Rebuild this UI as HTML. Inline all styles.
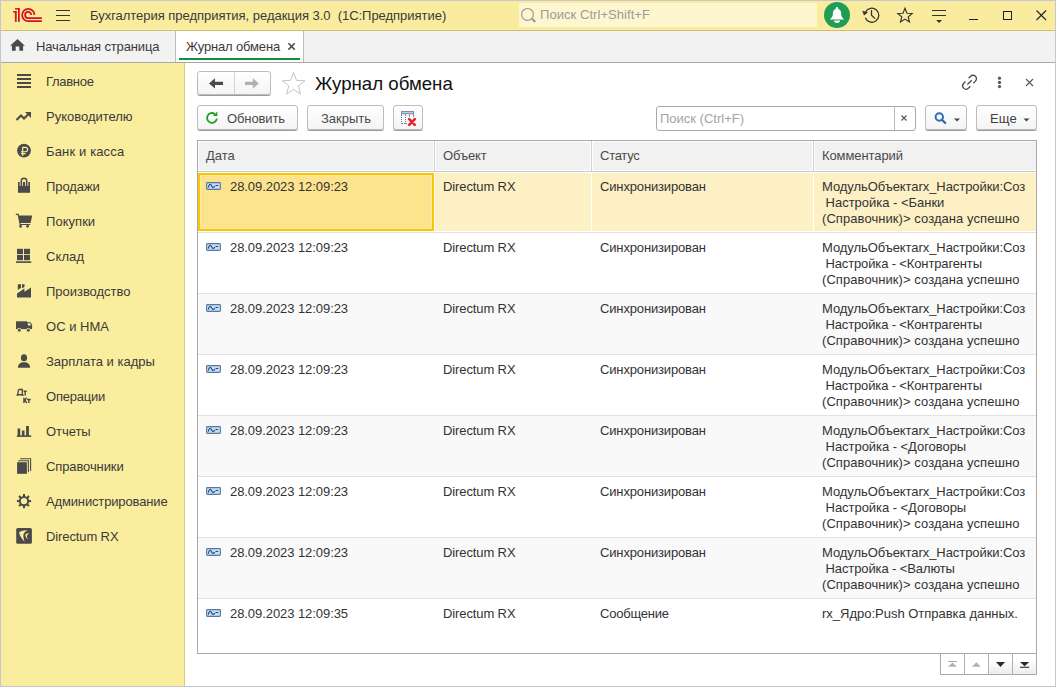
<!DOCTYPE html><html><head><meta charset="utf-8"><title>1C</title><style>
*{margin:0;padding:0;box-sizing:border-box}
html,body{width:1056px;height:687px;overflow:hidden;background:#fff;font-family:"Liberation Sans", sans-serif}
.a{position:absolute}
.t{position:absolute;white-space:pre}
svg{position:absolute;overflow:visible}
.btn{position:absolute;border:1px solid #bdbdbd;border-radius:3px;background:linear-gradient(#ffffff,#f4f4f4);box-shadow:0 1px 0 #9a9a9a}
</style></head><body>
<div class="a" style="left:0;top:0;width:1056px;height:687px;border:1px solid #c5c6cf;"></div>
<div class="a" style="left:1px;top:1px;width:1054px;height:29px;background:#f9ec9e"></div>
<div class="a" style="left:1px;top:29px;width:1054px;height:1px;background:#fcefa6"></div>
<div class="a" style="left:1px;top:30px;width:1054px;height:1px;background:#cebd70"></div>
<div class="a" style="left:1px;top:31px;width:1054px;height:31px;background:#f2f2f2"></div>
<div class="a" style="left:1px;top:31px;width:1054px;height:1px;background:#f4f4f7"></div>
<div class="a" style="left:1px;top:62px;width:1054px;height:1px;background:#a8a8a8"></div>
<div class="a" style="left:1px;top:63px;width:183px;height:623px;background:#fbed9e"></div>
<div class="a" style="left:184px;top:63px;width:1px;height:623px;background:#d9c77c"></div>
<svg style="left:0;top:0" width="60" height="30">
<g fill="#d8111e"><rect x="14.9" y="11.1" width="1.8" height="10.8"/><rect x="13.1" y="11.1" width="3.6" height="1.5"/>
<rect x="18" y="8.1" width="1.75" height="13.8"/><rect x="15.1" y="8.1" width="4.6" height="1.5"/></g>
<g fill="none" stroke="#d8111e" stroke-width="1.75">
<path d="M41.9 21.1 H28.3 A6.15 6.15 0 1 1 34.45 14.95"/>
<path d="M41.9 18.1 H28.2 A3.1 3.1 0 1 1 31.3 15"/>
</g></svg>
<div class="a" style="left:56px;top:10px;width:14px;height:1px;background:#333"></div>
<div class="a" style="left:56px;top:15px;width:14px;height:1px;background:#333"></div>
<div class="a" style="left:56px;top:20px;width:14px;height:1px;background:#333"></div>
<div class="t" style="left:90px;top:8.00px;font-size:13px;line-height:15px;color:#3a3a3a;letter-spacing:-0.031px;">Бухгалтерия предприятия, редакция 3.0  (1С:Предприятие)</div>
<div class="a" style="left:519px;top:3px;width:298px;height:24px;background:#fdf6cf;border-radius:1px"></div>
<svg style="left:0;top:0" width="1" height="1"><g fill="none" stroke="#999" stroke-width="1.15"><circle cx="527.5" cy="14.4" r="5.9"/><path d="M532 18.8 L535.3 22" stroke-width="2.1"/></g></svg>
<div class="t" style="left:540px;top:7.20px;font-size:13px;line-height:15px;color:#9b9b9b;letter-spacing:0.053px;">Поиск Ctrl+Shift+F</div>
<svg style="left:0;top:0" width="1" height="1"><circle cx="837" cy="15" r="13" fill="#1f9d55"/>
<path d="M829.8 19.4 C831.6 18 832.9 16.5 832.9 13.2 C832.9 10.4 834.6 8.7 837 8.7 C839.4 8.7 841.1 10.4 841.1 13.2 C841.1 16.5 842.4 18 844.2 19.4 Z" fill="#fff"/>
<circle cx="837" cy="8.2" r="1.2" fill="#fff"/>
<path d="M834 20.6 H840 A3 2.4 0 0 1 834 20.6 Z" fill="#fff"/>
</svg>
<svg style="left:0;top:0" width="1" height="1"><g fill="none" stroke="#333" stroke-width="1.3">
<path d="M865.6 12 A7 7 0 1 1 865.3 17.8"/>
<path d="M871.5 10 V15.2 L875 18.6"/></g>
<path d="M862.3 10.8 L868 12.3 L864 15.5 Z" fill="#333"/></svg>
<svg style="left:0;top:0" width="1" height="1"><path d="M905 8.2 L907 13.2 L912.2 13.5 L908.2 16.9 L909.5 22 L905 19.1 L900.5 22 L901.8 16.9 L897.8 13.5 L903 13.2 Z" fill="none" stroke="#333" stroke-width="1.15" stroke-linejoin="miter"/></svg>
<div class="a" style="left:932px;top:10px;width:14px;height:1.3px;background:#333"></div>
<div class="a" style="left:932px;top:15px;width:14px;height:1.3px;background:#333"></div>
<svg style="left:0;top:0" width="1" height="1"><path d="M936.2 20 H942 L939.1 22.9 Z" fill="#333"/></svg>
<div class="a" style="left:969px;top:19px;width:9px;height:1px;background:#222"></div>
<div class="a" style="left:1003px;top:11px;width:9px;height:9px;border:1px solid #222"></div>
<svg style="left:0;top:0" width="1" height="1"><path d="M1036.5 10.5 L1046 20 M1046 10.5 L1036.5 20" stroke="#222" stroke-width="1.1"/></svg>
<div class="a" style="left:175px;top:31px;width:1px;height:31px;background:#bdbdbd"></div>
<div class="a" style="left:176px;top:31px;width:127px;height:31px;background:#fff"></div>
<div class="a" style="left:303px;top:31px;width:1px;height:31px;background:#bdbdbd"></div>
<div class="a" style="left:179px;top:58px;width:121px;height:2px;background:#0e8f3e"></div>
<svg style="left:0;top:0" width="1" height="1"><path d="M17.5 39 L24.9 45.8 H23.1 V50.8 H19.3 V46.6 H15.7 V50.8 H11.9 V45.8 H10.1 Z" fill="#4a4a4a"/></svg>
<div class="t" style="left:36px;top:38.50px;font-size:13px;line-height:15px;color:#3a3a3a;letter-spacing:-0.136px;">Начальная страница</div>
<div class="t" style="left:186px;top:38.50px;font-size:13px;line-height:15px;color:#3a3a3a;letter-spacing:-0.154px;">Журнал обмена</div>
<svg style="left:0;top:0" width="1" height="1"><path d="M288.4 43.3 L294.7 49.6 M294.7 43.3 L288.4 49.6" stroke="#4a4a4a" stroke-width="1.5"/></svg>
<div class="t" style="left:46px;top:73.50px;font-size:13px;line-height:15px;color:#3a3a3a;letter-spacing:-0.291px;">Главное</div>
<div class="t" style="left:46px;top:108.50px;font-size:13px;line-height:15px;color:#3a3a3a;letter-spacing:-0.010px;">Руководителю</div>
<div class="t" style="left:46px;top:143.50px;font-size:13px;line-height:15px;color:#3a3a3a;letter-spacing:0.145px;">Банк и касса</div>
<div class="t" style="left:46px;top:178.50px;font-size:13px;line-height:15px;color:#3a3a3a;letter-spacing:-0.082px;">Продажи</div>
<div class="t" style="left:46px;top:213.50px;font-size:13px;line-height:15px;color:#3a3a3a;letter-spacing:0.036px;">Покупки</div>
<div class="t" style="left:46px;top:248.50px;font-size:13px;line-height:15px;color:#3a3a3a;letter-spacing:0.105px;">Склад</div>
<div class="t" style="left:46px;top:283.50px;font-size:13px;line-height:15px;color:#3a3a3a;letter-spacing:-0.028px;">Производство</div>
<div class="t" style="left:46px;top:318.50px;font-size:13px;line-height:15px;color:#3a3a3a;letter-spacing:0.016px;">ОС и НМА</div>
<div class="t" style="left:46px;top:353.50px;font-size:13px;line-height:15px;color:#3a3a3a;letter-spacing:0.005px;">Зарплата и кадры</div>
<div class="t" style="left:46px;top:388.50px;font-size:13px;line-height:15px;color:#3a3a3a;letter-spacing:-0.226px;">Операции</div>
<div class="t" style="left:46px;top:423.50px;font-size:13px;line-height:15px;color:#3a3a3a;letter-spacing:-0.061px;">Отчеты</div>
<div class="t" style="left:46px;top:458.50px;font-size:13px;line-height:15px;color:#3a3a3a;letter-spacing:-0.108px;">Справочники</div>
<div class="t" style="left:46px;top:493.50px;font-size:13px;line-height:15px;color:#3a3a3a;letter-spacing:-0.147px;">Администрирование</div>
<div class="t" style="left:46px;top:528.50px;font-size:13px;line-height:15px;color:#3a3a3a;letter-spacing:-0.111px;">Directum RX</div>
<svg style="left:0;top:0" width="1" height="1"><g fill="#4a4a4a"><rect x="17" y="74.0" width="14" height="2" /><rect x="17" y="78.0" width="14" height="2"/><rect x="17" y="82.0" width="14" height="2"/><rect x="17" y="86.0" width="14" height="2"/><path d="M16.5 120.0 L21 115.5 L24 118.5 L28 114.5" fill="none" stroke="#4a4a4a" stroke-width="2"/><path d="M25 112.0 H31 V118.0 Z"/><circle cx="24" cy="150.6" r="6.9"/><path d="M22.7 156 V147.3 H25.4 A2.2 2.2 0 0 1 25.4 151.7 H20.9 M20.9 153.6 H25.6" fill="none" stroke="#fbed9e" stroke-width="1.15"/><rect x="18" y="182" width="12" height="10.8"/><path d="M21.3 186 V181 A2.7 2.7 0 0 1 26.7 181 V186" fill="none" stroke="#fbed9e" stroke-width="3.2"/><path d="M21.3 186 V181 A2.7 2.7 0 0 1 26.7 181 V186" fill="none" stroke="#4a4a4a" stroke-width="1.5"/><path d="M15.8 213.8 H18.6 L19.2 215.6 H32.2 L30.6 223 H20.4 L20.7 224 H30.2 V225 H19.7 L17.7 215 H15.8 Z"/><circle cx="20.6" cy="226.3" r="1.35"/><circle cx="27.6" cy="226.3" r="1.35"/><rect x="17" y="248.8" width="6" height="5.4"/><rect x="24" y="248.8" width="6" height="5.4"/><rect x="17" y="255" width="6" height="5.2"/><rect x="24" y="255" width="6" height="5.2"/><rect x="16" y="261.3" width="15.2" height="1.6"/><path d="M17 297.4 V293.6 L24.4 288.6 V291.8 L31 287.6 V297.4 Z"/><path d="M17.8 284.3 H21 V287.8 L17.8 290 Z M22 284.3 H24.5 V286.8 L22 288.4 Z"/><rect x="16" y="321.3" width="11" height="7.8"/><path d="M27 322.3 H30.6 L32.1 325 V329.1 H27 Z"/><path d="M27.9 323.3 H30.1 L31.1 325.6 H27.9 Z" fill="#fbed9e"/><circle cx="19.3" cy="330.2" r="1.9" stroke="#fbed9e" stroke-width="0.9"/><circle cx="28.3" cy="330.2" r="1.9" stroke="#fbed9e" stroke-width="0.9"/><ellipse cx="24" cy="357.8" rx="3.1" ry="3.5"/><path d="M17.9 367.8 C17.9 364 20 362.2 24 362.2 C28 362.2 30.1 364 30.1 367.8 Z"/><path d="M18.6 389.5 H22.3 V394.7 M18.6 389.5 L17.7 394.7 M16.8 394.7 H23.3 M17.3 394.5 V396 M22.9 394.5 V396 M23.6 391.2 H26.7 M25.15 391.2 V395.6 M23.9 397.8 V403 M24.3 400.5 L26.7 397.8 M24.7 400.1 L26.9 403 M27.1 399.5 H30.7 M28.9 399.5 V403" fill="none" stroke="#4a4a4a" stroke-width="1.35"/><rect x="17.6" y="428.5" width="2.6" height="7.5"/><rect x="21.9" y="430.5" width="2.6" height="5.5"/><rect x="26.1" y="426" width="2.8" height="10"/><rect x="16.8" y="435.4" width="14.4" height="1.5"/><rect x="17.1" y="462.2" width="9.8" height="11.6"/><path d="M18.2 460.8 H28.4 V472.3 M20.1 458.8 H30.6 V471" fill="none" stroke="#4a4a4a" stroke-width="1.1"/><g transform="translate(24 501.1)"><circle r="4.2" fill="none" stroke="#4a4a4a" stroke-width="2"/><rect x="-1" y="-7.1" width="2" height="3" transform="rotate(0)"/><rect x="-1" y="-7.1" width="2" height="3" transform="rotate(45)"/><rect x="-1" y="-7.1" width="2" height="3" transform="rotate(90)"/><rect x="-1" y="-7.1" width="2" height="3" transform="rotate(135)"/><rect x="-1" y="-7.1" width="2" height="3" transform="rotate(180)"/><rect x="-1" y="-7.1" width="2" height="3" transform="rotate(225)"/><rect x="-1" y="-7.1" width="2" height="3" transform="rotate(270)"/><rect x="-1" y="-7.1" width="2" height="3" transform="rotate(315)"/></g><rect x="16.2" y="528" width="15.7" height="15.8" rx="1.6"/><path d="M19 532.3 C21 531 25 530 27.6 530.2 C25 531.5 23 533.5 23.3 536 C23.5 538 24 540 24.6 541.8 C22 539 19.5 535.5 19 532.3 Z" fill="#fbed9e"/><path d="M25.3 534.6 C26.5 533.6 28 533.1 29.2 533.2 C27.5 534.2 26.8 535.5 27 537 L27.6 539.8 C26.5 538.3 25.5 536.5 25.3 534.6 Z" fill="#fbed9e"/></g></svg>
<div class="btn" style="left:197px;top:71px;width:74px;height:24px"></div>
<div class="a" style="left:234px;top:72px;width:1px;height:22px;background:#d4d4d4"></div>
<svg style="left:0;top:0" width="1" height="1"><path d="M209 83.4 L215 78.2 V81.8 H223 V85 H215 V88.6 Z" fill="#4a4a4a"/>
<path d="M258.8 83.4 L252.8 78.2 V81.8 H245 V85 H252.8 V88.6 Z" fill="#b0b0b0"/>
<path d="M293.60 72.50 L296.54 80.35 L304.92 80.72 L298.36 85.95 L300.59 94.03 L293.60 89.40 L286.61 94.03 L288.84 85.95 L282.28 80.72 L290.66 80.35 Z" fill="none" stroke="#c4c4c4" stroke-width="1" stroke-linejoin="miter"/></svg>
<div class="t" style="left:315px;top:73.23px;font-size:18.67px;line-height:21px;color:#111;">Журнал обмена</div>
<svg style="left:0;top:0" width="1" height="1"><g fill="none" stroke="#4a4a4a" stroke-width="1.3">
<path d="M965.5 81.5 L963.5 83.5 A3.4 3.4 0 0 0 968.3 88.3 L970.3 86.3"/>
<path d="M968.6 78.25 L970.56 76.26 A3.45 3.45 0 0 1 975.44 81.14 L973.4 83.2"/>
<path d="M967.3 84.5 L971.8 80.2"/></g>
<circle cx="999.5" cy="78.2" r="1.6" fill="#555"/><circle cx="999.5" cy="82.4" r="1.6" fill="#555"/><circle cx="999.5" cy="86.6" r="1.6" fill="#555"/>
<path d="M1026 79 L1033 86 M1033 79 L1026 86" stroke="#555" stroke-width="1.1"/></svg>
<div class="btn" style="left:197px;top:105px;width:101px;height:25px"></div>
<svg style="left:0;top:0" width="1" height="1"><path d="M216.85 118.58 A4.9 4.9 0 1 1 214.8 113.9" fill="none" stroke="#1f9f1f" stroke-width="1.8"/><path d="M217.4 111.6 V116 H212.9 Z" fill="#1f9f1f"/></svg>
<div class="t" style="left:227px;top:111.00px;font-size:13px;line-height:15px;color:#4a4a4a;letter-spacing:-0.108px;">Обновить</div>
<div class="btn" style="left:307px;top:105px;width:77px;height:25px"></div>
<div class="t" style="left:321px;top:111.00px;font-size:13px;line-height:15px;color:#4a4a4a;letter-spacing:-0.010px;">Закрыть</div>
<div class="btn" style="left:393px;top:105px;width:30px;height:25px"></div>
<svg style="left:0;top:0" width="1" height="1"><rect x="401.5" y="111.5" width="12" height="2.2" fill="#a9d2fa" stroke="#7b8fa5" stroke-width="1"/>
<path d="M401.5 114 V116 M405.5 114 V116 M409.5 114 V117 M413.5 114 V117" stroke="#7b8fa5" stroke-width="1"/>
<path d="M401.5 117 V124 M405.5 117 V124 M402 123.5 H408" stroke="#6f8294" stroke-width="1" stroke-dasharray="1 1" fill="none"/>
<path d="M409.2 119.2 L414.8 124.8 M414.8 119.2 L409.2 124.8" stroke="#e52229" stroke-width="2.6" stroke-linecap="round"/></svg>
<div class="a" style="left:656px;top:106px;width:260px;height:25px;border:1px solid #a9a9a9;border-radius:3px;background:#fff"></div>
<div class="a" style="left:894px;top:107px;width:1px;height:23px;background:#bcbcbc"></div>
<div class="t" style="left:660px;top:111.00px;font-size:13px;line-height:15px;color:#a3a3a8;letter-spacing:-0.003px;">Поиск (Ctrl+F)</div>
<svg style="left:0;top:0" width="1" height="1"><path d="M901.5 115.5 L906.5 120.5 M906.5 115.5 L901.5 120.5" stroke="#555" stroke-width="1.1"/></svg>
<div class="btn" style="left:925px;top:105px;width:42px;height:25px"></div>
<svg style="left:0;top:0" width="1" height="1"><circle cx="939.3" cy="117" r="3.7" fill="none" stroke="#2a6db5" stroke-width="2"/><path d="M941.9 119.7 L945.2 123" stroke="#2a6db5" stroke-width="2.3" stroke-linecap="round"/>
<path d="M954 118.5 H960 L957 121.5 Z" fill="#444"/></svg>
<div class="btn" style="left:976px;top:105px;width:61px;height:25px"></div>
<div class="t" style="left:990px;top:111.00px;font-size:13px;line-height:15px;color:#404040;letter-spacing:0.134px;">Еще</div>
<svg style="left:0;top:0" width="1" height="1"><path d="M1023.5 118.5 H1029.5 L1026.5 121.5 Z" fill="#444"/></svg>
<div class="a" style="left:197px;top:140px;width:840px;height:514px;border:1px solid #a9a9a9"></div>
<div class="a" style="left:198px;top:141px;width:838px;height:30px;background:#f1f1f1;border-top:1px solid #fff;border-left:1px solid #fff;border-bottom:1px solid #fff"></div>
<div class="a" style="left:198px;top:171px;width:838px;height:1px;background:#c9c9c9"></div>
<div class="a" style="left:433px;top:142px;width:1px;height:28px;background:#fff"></div>
<div class="a" style="left:434px;top:141px;width:1px;height:30px;background:#d0d0d0"></div>
<div class="a" style="left:435px;top:142px;width:1px;height:28px;background:#fff"></div>
<div class="a" style="left:590px;top:142px;width:1px;height:28px;background:#fff"></div>
<div class="a" style="left:591px;top:141px;width:1px;height:30px;background:#d0d0d0"></div>
<div class="a" style="left:592px;top:142px;width:1px;height:28px;background:#fff"></div>
<div class="a" style="left:812px;top:142px;width:1px;height:28px;background:#fff"></div>
<div class="a" style="left:813px;top:141px;width:1px;height:30px;background:#d0d0d0"></div>
<div class="a" style="left:814px;top:142px;width:1px;height:28px;background:#fff"></div>
<div class="t" style="left:206px;top:148.00px;font-size:13px;line-height:15px;color:#4a4a4a;letter-spacing:-0.055px;">Дата</div>
<div class="t" style="left:443px;top:148.00px;font-size:13px;line-height:15px;color:#4a4a4a;letter-spacing:-0.092px;">Объект</div>
<div class="t" style="left:600px;top:148.00px;font-size:13px;line-height:15px;color:#4a4a4a;letter-spacing:-0.261px;">Статус</div>
<div class="t" style="left:822px;top:148.00px;font-size:13px;line-height:15px;color:#4a4a4a;letter-spacing:-0.093px;">Комментарий</div>
<div class="a" style="left:198px;top:172px;width:838px;height:481px;overflow:hidden">
<div class="a" style="left:0;top:1px;width:838px;height:58px;background:#fdf0c5"></div>
<div class="a" style="left:0;top:60px;width:838px;height:1px;background:#e1e1e1"></div>
<div class="a" style="left:236px;top:0px;width:1px;height:60px;background:#fff"></div>
<div class="a" style="left:393px;top:0px;width:1px;height:60px;background:#fff"></div>
<div class="a" style="left:615px;top:0px;width:1px;height:60px;background:#fff"></div>
<div class="a" style="left:0;top:1px;width:236px;height:58px;background:#fde38e;border:2px solid #f8c700"></div>
<div class="a" style="left:2px;top:3px;width:232px;height:54px;border:1px solid #fde9a6"></div>
<svg style="left:8px;top:10px" width="15" height="9"><rect x="0.6" y="0.6" width="13.8" height="6.8" rx="0.8" fill="#c6def4" stroke="#5b7897" stroke-width="1.1"/><path d="M2.2 5.6 C2.8 3.5 3.6 2.2 4.4 2.3 C5.4 2.5 5.7 5.3 7 5.4 C7.8 5.4 8.4 4.6 9 4.3" fill="none" stroke="#1a4d8c" stroke-width="1.15"/><path d="M9.9 3.5 H11.9" stroke="#1a4d8c" stroke-width="1.1" stroke-linecap="round"/></svg>
<div class="t" style="left:32px;top:6.70px;font-size:13px;line-height:15px;color:#333333;letter-spacing:-0.067px;">28.09.2023 12:09:23</div>
<div class="t" style="left:245px;top:6.70px;font-size:13px;line-height:15px;color:#333333;letter-spacing:-0.111px;">Directum RX</div>
<div class="t" style="left:402px;top:6.70px;font-size:13px;line-height:15px;color:#333333;letter-spacing:-0.149px;">Синхронизирован</div>
<div class="a" style="left:616px;top:0px;width:222px;height:60px;overflow:hidden">
<div class="t" style="left:8px;top:6.70px;font-size:13px;line-height:15px;color:#333333;letter-spacing:-0.070px;">МодульОбъектаrx_Настройки:Соз</div>
<div class="t" style="left:8px;top:22.70px;font-size:13px;line-height:15px;color:#333333;letter-spacing:-0.016px;"> Настройка - &lt;Банки</div>
<div class="t" style="left:8px;top:38.70px;font-size:13px;line-height:15px;color:#333333;letter-spacing:0.068px;">(Справочник)&gt; создана успешно</div>
</div>
<div class="a" style="left:0;top:121px;width:838px;height:1px;background:#e1e1e1"></div>
<svg style="left:8px;top:71px" width="15" height="9"><rect x="0.6" y="0.6" width="13.8" height="6.8" rx="0.8" fill="#c6def4" stroke="#5b7897" stroke-width="1.1"/><path d="M2.2 5.6 C2.8 3.5 3.6 2.2 4.4 2.3 C5.4 2.5 5.7 5.3 7 5.4 C7.8 5.4 8.4 4.6 9 4.3" fill="none" stroke="#1a4d8c" stroke-width="1.15"/><path d="M9.9 3.5 H11.9" stroke="#1a4d8c" stroke-width="1.1" stroke-linecap="round"/></svg>
<div class="t" style="left:32px;top:67.70px;font-size:13px;line-height:15px;color:#333333;letter-spacing:-0.067px;">28.09.2023 12:09:23</div>
<div class="t" style="left:245px;top:67.70px;font-size:13px;line-height:15px;color:#333333;letter-spacing:-0.111px;">Directum RX</div>
<div class="t" style="left:402px;top:67.70px;font-size:13px;line-height:15px;color:#333333;letter-spacing:-0.149px;">Синхронизирован</div>
<div class="a" style="left:616px;top:61px;width:222px;height:60px;overflow:hidden">
<div class="t" style="left:8px;top:6.70px;font-size:13px;line-height:15px;color:#333333;letter-spacing:-0.070px;">МодульОбъектаrx_Настройки:Соз</div>
<div class="t" style="left:8px;top:22.70px;font-size:13px;line-height:15px;color:#333333;letter-spacing:-0.138px;"> Настройка - &lt;Контрагенты</div>
<div class="t" style="left:8px;top:38.70px;font-size:13px;line-height:15px;color:#333333;letter-spacing:0.068px;">(Справочник)&gt; создана успешно</div>
</div>
<div class="a" style="left:0;top:122px;width:838px;height:60px;background:#f9f9f9"></div>
<div class="a" style="left:0;top:182px;width:838px;height:1px;background:#e1e1e1"></div>
<svg style="left:8px;top:132px" width="15" height="9"><rect x="0.6" y="0.6" width="13.8" height="6.8" rx="0.8" fill="#c6def4" stroke="#5b7897" stroke-width="1.1"/><path d="M2.2 5.6 C2.8 3.5 3.6 2.2 4.4 2.3 C5.4 2.5 5.7 5.3 7 5.4 C7.8 5.4 8.4 4.6 9 4.3" fill="none" stroke="#1a4d8c" stroke-width="1.15"/><path d="M9.9 3.5 H11.9" stroke="#1a4d8c" stroke-width="1.1" stroke-linecap="round"/></svg>
<div class="t" style="left:32px;top:128.70px;font-size:13px;line-height:15px;color:#333333;letter-spacing:-0.067px;">28.09.2023 12:09:23</div>
<div class="t" style="left:245px;top:128.70px;font-size:13px;line-height:15px;color:#333333;letter-spacing:-0.111px;">Directum RX</div>
<div class="t" style="left:402px;top:128.70px;font-size:13px;line-height:15px;color:#333333;letter-spacing:-0.149px;">Синхронизирован</div>
<div class="a" style="left:616px;top:122px;width:222px;height:60px;overflow:hidden">
<div class="t" style="left:8px;top:6.70px;font-size:13px;line-height:15px;color:#333333;letter-spacing:-0.070px;">МодульОбъектаrx_Настройки:Соз</div>
<div class="t" style="left:8px;top:22.70px;font-size:13px;line-height:15px;color:#333333;letter-spacing:-0.138px;"> Настройка - &lt;Контрагенты</div>
<div class="t" style="left:8px;top:38.70px;font-size:13px;line-height:15px;color:#333333;letter-spacing:0.068px;">(Справочник)&gt; создана успешно</div>
</div>
<div class="a" style="left:0;top:243px;width:838px;height:1px;background:#e1e1e1"></div>
<svg style="left:8px;top:193px" width="15" height="9"><rect x="0.6" y="0.6" width="13.8" height="6.8" rx="0.8" fill="#c6def4" stroke="#5b7897" stroke-width="1.1"/><path d="M2.2 5.6 C2.8 3.5 3.6 2.2 4.4 2.3 C5.4 2.5 5.7 5.3 7 5.4 C7.8 5.4 8.4 4.6 9 4.3" fill="none" stroke="#1a4d8c" stroke-width="1.15"/><path d="M9.9 3.5 H11.9" stroke="#1a4d8c" stroke-width="1.1" stroke-linecap="round"/></svg>
<div class="t" style="left:32px;top:189.70px;font-size:13px;line-height:15px;color:#333333;letter-spacing:-0.067px;">28.09.2023 12:09:23</div>
<div class="t" style="left:245px;top:189.70px;font-size:13px;line-height:15px;color:#333333;letter-spacing:-0.111px;">Directum RX</div>
<div class="t" style="left:402px;top:189.70px;font-size:13px;line-height:15px;color:#333333;letter-spacing:-0.149px;">Синхронизирован</div>
<div class="a" style="left:616px;top:183px;width:222px;height:60px;overflow:hidden">
<div class="t" style="left:8px;top:6.70px;font-size:13px;line-height:15px;color:#333333;letter-spacing:-0.070px;">МодульОбъектаrx_Настройки:Соз</div>
<div class="t" style="left:8px;top:22.70px;font-size:13px;line-height:15px;color:#333333;letter-spacing:-0.138px;"> Настройка - &lt;Контрагенты</div>
<div class="t" style="left:8px;top:38.70px;font-size:13px;line-height:15px;color:#333333;letter-spacing:0.068px;">(Справочник)&gt; создана успешно</div>
</div>
<div class="a" style="left:0;top:244px;width:838px;height:60px;background:#f9f9f9"></div>
<div class="a" style="left:0;top:304px;width:838px;height:1px;background:#e1e1e1"></div>
<svg style="left:8px;top:254px" width="15" height="9"><rect x="0.6" y="0.6" width="13.8" height="6.8" rx="0.8" fill="#c6def4" stroke="#5b7897" stroke-width="1.1"/><path d="M2.2 5.6 C2.8 3.5 3.6 2.2 4.4 2.3 C5.4 2.5 5.7 5.3 7 5.4 C7.8 5.4 8.4 4.6 9 4.3" fill="none" stroke="#1a4d8c" stroke-width="1.15"/><path d="M9.9 3.5 H11.9" stroke="#1a4d8c" stroke-width="1.1" stroke-linecap="round"/></svg>
<div class="t" style="left:32px;top:250.70px;font-size:13px;line-height:15px;color:#333333;letter-spacing:-0.067px;">28.09.2023 12:09:23</div>
<div class="t" style="left:245px;top:250.70px;font-size:13px;line-height:15px;color:#333333;letter-spacing:-0.111px;">Directum RX</div>
<div class="t" style="left:402px;top:250.70px;font-size:13px;line-height:15px;color:#333333;letter-spacing:-0.149px;">Синхронизирован</div>
<div class="a" style="left:616px;top:244px;width:222px;height:60px;overflow:hidden">
<div class="t" style="left:8px;top:6.70px;font-size:13px;line-height:15px;color:#333333;letter-spacing:-0.070px;">МодульОбъектаrx_Настройки:Соз</div>
<div class="t" style="left:8px;top:22.70px;font-size:13px;line-height:15px;color:#333333;letter-spacing:-0.046px;"> Настройка - &lt;Договоры</div>
<div class="t" style="left:8px;top:38.70px;font-size:13px;line-height:15px;color:#333333;letter-spacing:0.068px;">(Справочник)&gt; создана успешно</div>
</div>
<div class="a" style="left:0;top:365px;width:838px;height:1px;background:#e1e1e1"></div>
<svg style="left:8px;top:315px" width="15" height="9"><rect x="0.6" y="0.6" width="13.8" height="6.8" rx="0.8" fill="#c6def4" stroke="#5b7897" stroke-width="1.1"/><path d="M2.2 5.6 C2.8 3.5 3.6 2.2 4.4 2.3 C5.4 2.5 5.7 5.3 7 5.4 C7.8 5.4 8.4 4.6 9 4.3" fill="none" stroke="#1a4d8c" stroke-width="1.15"/><path d="M9.9 3.5 H11.9" stroke="#1a4d8c" stroke-width="1.1" stroke-linecap="round"/></svg>
<div class="t" style="left:32px;top:311.70px;font-size:13px;line-height:15px;color:#333333;letter-spacing:-0.067px;">28.09.2023 12:09:23</div>
<div class="t" style="left:245px;top:311.70px;font-size:13px;line-height:15px;color:#333333;letter-spacing:-0.111px;">Directum RX</div>
<div class="t" style="left:402px;top:311.70px;font-size:13px;line-height:15px;color:#333333;letter-spacing:-0.149px;">Синхронизирован</div>
<div class="a" style="left:616px;top:305px;width:222px;height:60px;overflow:hidden">
<div class="t" style="left:8px;top:6.70px;font-size:13px;line-height:15px;color:#333333;letter-spacing:-0.070px;">МодульОбъектаrx_Настройки:Соз</div>
<div class="t" style="left:8px;top:22.70px;font-size:13px;line-height:15px;color:#333333;letter-spacing:-0.046px;"> Настройка - &lt;Договоры</div>
<div class="t" style="left:8px;top:38.70px;font-size:13px;line-height:15px;color:#333333;letter-spacing:0.068px;">(Справочник)&gt; создана успешно</div>
</div>
<div class="a" style="left:0;top:366px;width:838px;height:60px;background:#f9f9f9"></div>
<div class="a" style="left:0;top:426px;width:838px;height:1px;background:#e1e1e1"></div>
<svg style="left:8px;top:376px" width="15" height="9"><rect x="0.6" y="0.6" width="13.8" height="6.8" rx="0.8" fill="#c6def4" stroke="#5b7897" stroke-width="1.1"/><path d="M2.2 5.6 C2.8 3.5 3.6 2.2 4.4 2.3 C5.4 2.5 5.7 5.3 7 5.4 C7.8 5.4 8.4 4.6 9 4.3" fill="none" stroke="#1a4d8c" stroke-width="1.15"/><path d="M9.9 3.5 H11.9" stroke="#1a4d8c" stroke-width="1.1" stroke-linecap="round"/></svg>
<div class="t" style="left:32px;top:372.70px;font-size:13px;line-height:15px;color:#333333;letter-spacing:-0.067px;">28.09.2023 12:09:23</div>
<div class="t" style="left:245px;top:372.70px;font-size:13px;line-height:15px;color:#333333;letter-spacing:-0.111px;">Directum RX</div>
<div class="t" style="left:402px;top:372.70px;font-size:13px;line-height:15px;color:#333333;letter-spacing:-0.149px;">Синхронизирован</div>
<div class="a" style="left:616px;top:366px;width:222px;height:60px;overflow:hidden">
<div class="t" style="left:8px;top:6.70px;font-size:13px;line-height:15px;color:#333333;letter-spacing:-0.070px;">МодульОбъектаrx_Настройки:Соз</div>
<div class="t" style="left:8px;top:22.70px;font-size:13px;line-height:15px;color:#333333;letter-spacing:-0.108px;"> Настройка - &lt;Валюты</div>
<div class="t" style="left:8px;top:38.70px;font-size:13px;line-height:15px;color:#333333;letter-spacing:0.068px;">(Справочник)&gt; создана успешно</div>
</div>
<svg style="left:8px;top:437px" width="15" height="9"><rect x="0.6" y="0.6" width="13.8" height="6.8" rx="0.8" fill="#c6def4" stroke="#5b7897" stroke-width="1.1"/><path d="M2.2 5.6 C2.8 3.5 3.6 2.2 4.4 2.3 C5.4 2.5 5.7 5.3 7 5.4 C7.8 5.4 8.4 4.6 9 4.3" fill="none" stroke="#1a4d8c" stroke-width="1.15"/><path d="M9.9 3.5 H11.9" stroke="#1a4d8c" stroke-width="1.1" stroke-linecap="round"/></svg>
<div class="t" style="left:32px;top:433.70px;font-size:13px;line-height:15px;color:#333333;letter-spacing:-0.067px;">28.09.2023 12:09:35</div>
<div class="t" style="left:245px;top:433.70px;font-size:13px;line-height:15px;color:#333333;letter-spacing:-0.111px;">Directum RX</div>
<div class="t" style="left:402px;top:433.70px;font-size:13px;line-height:15px;color:#333333;letter-spacing:-0.210px;">Сообщение</div>
<div class="a" style="left:616px;top:427px;width:222px;height:60px;overflow:hidden">
<div class="t" style="left:8px;top:6.70px;font-size:13px;line-height:15px;color:#333333;letter-spacing:-0.011px;">rx_Ядро:Push Отправка данных.</div>
</div>
</div>
<div class="a" style="left:940px;top:654px;width:97px;height:21px;border:1px solid #a9a9a9;border-top:none;background:#fff"></div>
<div class="a" style="left:989px;top:654px;width:47px;height:20px;background:linear-gradient(#fff 30%,#ececec)"></div>
<div class="a" style="left:964px;top:654px;width:1px;height:20px;background:#b0b0b0"></div>
<div class="a" style="left:988px;top:654px;width:1px;height:20px;background:#b0b0b0"></div>
<div class="a" style="left:1012px;top:654px;width:1px;height:20px;background:#b0b0b0"></div>
<svg style="left:0;top:0" width="1" height="1">
<rect x="948" y="661" width="9" height="1.1" fill="#b0b0b0"/><path d="M948 666.8 L952.5 662.4 L957 666.8 Z" fill="#b0b0b0"/>
<path d="M972 666.8 L976.4 662.2 L980.8 666.8 Z" fill="#b0b0b0"/>
<path d="M996 662 L1000.5 667 L1005 662 Z" fill="#2a2a2a"/>
<path d="M1020 662 L1024.6 666.3 L1029.2 662 Z" fill="#2a2a2a"/><rect x="1020" y="666.7" width="9.2" height="1.1" fill="#2a2a2a"/>
</svg>
</body></html>
